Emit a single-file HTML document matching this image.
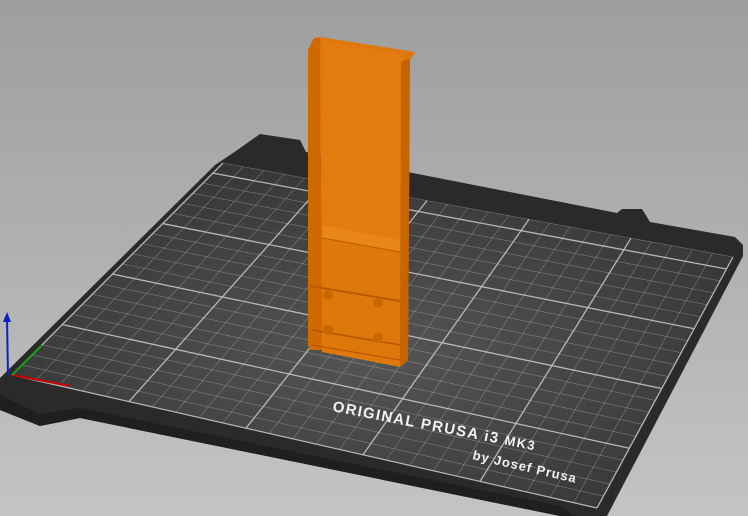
<!DOCTYPE html>
<html><head><style>
html,body{margin:0;padding:0;width:748px;height:516px;overflow:hidden}
body{background:linear-gradient(#9e9e9e,#c4c4c4)}
svg{position:absolute;left:0;top:0}
</style></head><body>
<svg id="s" width="748" height="516" viewBox="0 0 748 516" xmlns="http://www.w3.org/2000/svg">
<defs>
<radialGradient id="rg" cx="0.5" cy="0.55" r="0.6">
<stop offset="0" stop-color="#555"/><stop offset="1" stop-color="#353535"/>
</radialGradient>
</defs>
<polygon points="260,134 300,140 306,152 617,213 622,209 642,209 650,222 735,237 743,245 743,256 607,516 560,516 80,418 40,426 0,410 0,378 215,165 233,153" fill="#2a2a2a"/>
<polygon points="0,395 40,414 80,408 560,506 575,516 560,516 80,418 40,426 0,410" fill="#1f1f1f"/>
<polygon points="223,163 733,257 597,508 12,375" fill="url(#rg)"/>
<g id="grid" stroke="#c4c4c4" fill="none"></g>
<text x="332" y="411" transform="rotate(11 332 411)" fill="#f2f2f2" font-family="Liberation Sans, sans-serif" font-size="15" letter-spacing="1.4" font-weight="bold">ORIGINAL PRUSA i3 <tspan font-size="13">MK3</tspan></text>
<text x="472" y="459" transform="rotate(13 472 459)" fill="#f2f2f2" font-family="Liberation Sans, sans-serif" font-size="13" letter-spacing="1" font-weight="bold">by Josef Prusa</text>
<!-- object -->
<polygon points="308,50 314,38 320,37 322,350 310,350 308,345" fill="#d06a00"/>
<polygon points="320,37 415,52 410,60 408,360 400,367 322,352" fill="#df780a"/>
<polygon points="322,40 405,55 401,70 400,245 322,230" fill="#e27c10"/>
<polygon points="401,62 410,58 408,360 400,367" fill="#c66500"/>
<polygon points="322,225 400,240 400,252 322,238" fill="#ea8518"/>
<line x1="322" y1="238" x2="400" y2="252" stroke="#b85a00" stroke-width="1"/>
<polygon points="310,285 400,300 400,302 310,287" fill="#b85a00"/>
<line x1="312" y1="330" x2="400" y2="345" stroke="#b05500" stroke-width="1.5"/>
<line x1="312" y1="345" x2="400" y2="360" stroke="#b05500" stroke-width="1"/>
<circle cx="328" cy="295" r="5" fill="#c86800"/><circle cx="378" cy="303" r="5" fill="#c86800"/>
<circle cx="328" cy="330" r="5" fill="#c86800"/><circle cx="378" cy="338" r="5" fill="#c86800"/>
<!-- axes -->
<line x1="12" y1="375" x2="70" y2="386" stroke="#c00" stroke-width="2"/>
<line x1="12" y1="375" x2="42" y2="345" stroke="#1a9a1a" stroke-width="2"/>
<line x1="8" y1="375" x2="7" y2="318" stroke="#1020c0" stroke-width="2"/>
<polygon points="3,322 7,312 11,322" fill="#1020c0"/>
</svg>
<script>
var g=document.getElementById('grid'),TL=[223,163],TR=[733,257],BR=[597,508],BL=[12,375];
function P(u,v){var tx=TL[0]+(TR[0]-TL[0])*u,ty=TL[1]+(TR[1]-TL[1])*u,bx=BL[0]+(BR[0]-BL[0])*u,by=BL[1]+(BR[1]-BL[1])*u;return [tx+(bx-tx)*v,ty+(by-ty)*v];}
var h='';
for(var i=0;i<=25;i++){var a=P(i/25,0),b=P(i/25,1),m=(i%5==0);h+='<line x1="'+a[0]+'" y1="'+a[1]+'" x2="'+b[0]+'" y2="'+b[1]+'" stroke-width="'+(m?1.3:0.6)+'" opacity="'+(m?0.9:0.45)+'"/>';}
for(var j=0;j<=21;j++){var v=1-j/21,a=P(0,v),b=P(1,v),m=(j%5==0);h+='<line x1="'+a[0]+'" y1="'+a[1]+'" x2="'+b[0]+'" y2="'+b[1]+'" stroke-width="'+(m?1.3:0.6)+'" opacity="'+(m?0.9:0.45)+'"/>';}
g.innerHTML=h;
</script>
</body></html>
